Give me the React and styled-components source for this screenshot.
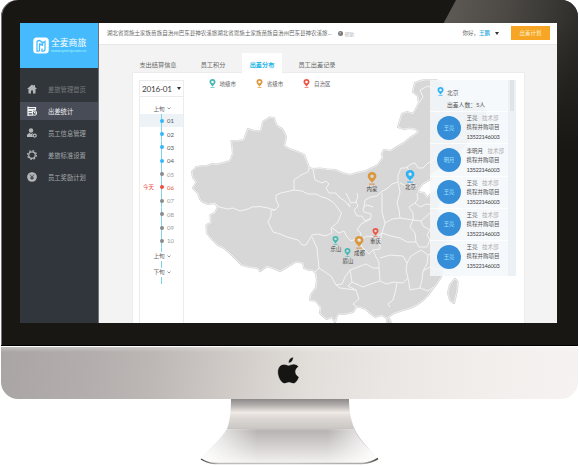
import React from "react";
import styled, { createGlobalStyle, css } from "styled-components";

const GlobalStyle = createGlobalStyle`
  * { box-sizing: border-box; }
  body {
    margin: 0;
    background: #fff;
    overflow: hidden;
    font-family: Lato, "Noto Sans CJK SC", sans-serif;
    color: #666;
  }
  svg { display: block; flex-shrink: 0; }
`;

/* ---------- Monitor ---------- */

const Monitor = styled.div`
  width: 579px;
  height: 466px;
  padding: 0 1px;
  display: flex;
  flex-direction: column;
  align-items: center;
`;

const Bezel = styled.div`
  position: relative;
  width: 577px;
  height: 346px;
  padding: 23px 20px 0 19px;
  border-radius: 17px 17px 0 0;
  border-bottom: 1px solid #000;
  background: #181714;
  box-shadow: inset 1px 0 0 #77757a, inset -1px 0 0 #5b5a56;

  &::before {
    content: "";
    position: absolute;
    inset: 0;
    border-radius: inherit;
    clip-path: polygon(455px 0, 100% 0, 100% 100%, 270px 100%);
    background:
      linear-gradient(to bottom, rgba(24, 23, 20, 0) 20px, #181714 150px),
      linear-gradient(100deg, #5d5954 440px, #4c4945 500px, #2d2c28 575px);
  }
`;

const Chin = styled.div`
  width: 577px;
  height: 53px;
  flex-shrink: 0;
  display: flex;
  justify-content: center;
  padding: 9px 3px 0 0;
  border-top: 1px solid #fff;
  border-radius: 0 0 17px 17px;
  background:
    linear-gradient(to bottom, rgba(255, 255, 255, 0.3), rgba(255, 255, 255, 0) 5px),
    linear-gradient(98deg, #aaa5a5 0, #b3aead 90px, #bcb7b5 150px, #d2cdc9 240px, #e2dfdb 310px, #ebe7e4 390px, #f1eeec 480px, #f5f2f1 577px);
`;

const Screen = styled.div`
  position: relative;
  width: 537px;
  height: 300px;
  display: flex;
  overflow: hidden;
  background: #f3f3f3;
`;

/* ---------- Sidebar ---------- */

const Sidebar = styled.aside`
  width: 79px;
  background: linear-gradient(#31363b, #30363c);
  border-right: 1px solid #6f7478;
`;

const Brand = styled.div`
  width: 78px;
  height: 45px;
  padding: 0 0 1px 13px;
  display: flex;
  align-items: center;
  gap: 2px;
  background: #45bbfd;
  color: #fff;
`;

const BrandText = styled.div`
  display: flex;
  flex-direction: column;
  white-space: nowrap;
`;

const BrandName = styled.strong`
  font-size: 8.8px;
  line-height: 10px;
  font-weight: 400;
`;

const BrandUrl = styled.span`
  font-size: 4px;
  line-height: 5px;
  color: #a4f6f8;
`;

const Nav = styled.nav`
  padding-top: 12px;
  display: flex;
  flex-direction: column;
  gap: 4px;
`;

const NavItem = styled.a`
  height: 18px;
  padding-left: 7px;
  display: flex;
  align-items: center;
  gap: 11px;
  font-size: 6.3px;
  white-space: nowrap;
  color: ${(p) => (p.$active ? "#f2f3f4" : p.$dim ? "#767a7d" : "#a5a8aa")};
  background: ${(p) => (p.$active ? "#474c57" : "transparent")};

  svg { color: ${(p) => (p.$active ? "#f2f3f4" : "#b4b5b6")}; }
`;

/* ---------- Main column ---------- */

const Main = styled.main`
  width: 458px;
  display: flex;
  flex-direction: column;
`;

const Header = styled.header`
  height: 22px;
  padding: 0 7px 1px 8px;
  display: flex;
  align-items: center;
  background: #fff;
  border-bottom: 1px solid #e8e8e8;
  font-size: 5.52px;
  white-space: nowrap;
`;

const Address = styled.span`
  width: 230.5px;
`;

const Help = styled.span`
  display: flex;
  align-items: center;
  gap: 2px;
  color: #b3b3b3;
  font-size: 4.8px;
`;

const HelpDot = styled.i`
  width: 5px;
  height: 5px;
  border-radius: 50%;
  background: #777;
  color: #fff;
  font: normal 4px/5px Lato, sans-serif;
  text-align: center;
`;

const User = styled.span`
  margin-left: auto;
  display: flex;
  align-items: center;
  b { color: #32a8de; font-weight: 500; }
`;

const Caret = styled.i`
  margin-left: ${(p) => p.$gap}px;
  border: 2.5px solid transparent;
  border-top: 3px solid #333;
  border-bottom: 0;
`;

const PlanButton = styled.button`
  width: 39px;
  height: 14px;
  margin-left: 12px;
  padding: 0;
  border: 0;
  background: #f7a524;
  color: #fff1cf;
  font: 5.5px Lato, "Noto Sans CJK SC", sans-serif;
`;

const Tabs = styled.div`
  height: 27px;
  padding: 8px 0 0 33px;
  display: flex;
  font-size: 6.2px;
`;

const Tab = styled.span`
  width: ${(p) => p.$w}px;
  padding-top: 3px;
  display: flex;
  justify-content: center;
  align-items: center;
  white-space: nowrap;
  color: #666;
  ${(p) =>
    p.$active &&
    css`
      margin-bottom: -1px;
      padding-top: 2px;
      position: relative;
      z-index: 1;
      background: #fff;
      color: #1fb5e6;
      font-weight: 700;
    `}
`;

const Board = styled.section`
  width: 393px;
  height: 251px;
  margin-left: 33px;
  padding-left: 6px;
  display: flex;
  background: #fff;
  border: 1px solid #ececec;
  border-bottom: 0;
`;

/* ---------- Timeline ---------- */

const Timeline = styled.div`
  width: 45px;
  margin-top: 7px;
  border: 1px solid #ececec;
  border-bottom: 0;
`;

const Month = styled.div`
  height: 16px;
  padding-left: 2px;
  display: flex;
  align-items: center;
  border-bottom: 1px solid #ececec;
  font-size: 8.2px;
  letter-spacing: -0.25px;
  white-space: nowrap;
  color: #444;
`;

const Period = styled.div`
  height: ${(p) => p.$h}px;
  padding: ${(p) => p.$top || 0}px 0 0 13.5px;
  display: flex;
  align-items: center;
  gap: 2px;
  font-size: 5.6px;
  white-space: nowrap;
`;

const DayRow = styled.div`
  height: 13.36px;
  display: grid;
  grid-template-columns: 18px 7px 1fr;
  align-items: center;
  font-size: 6px;
  color: ${(p) => ({ done: "#555", next: "#999", today: "#e8503f" })[p.$state]};
  background: ${(p) => (p.$selected ? "#edf2f6" : "transparent")};
`;

const TodayMark = styled.span`
  padding-left: 3px;
  font-size: 5.5px;
  white-space: nowrap;
  color: #e8503f;
`;

const Track = styled.span`
  height: 100%;
  display: flex;
  justify-content: center;
  align-items: center;
  background: linear-gradient(#7fd3e6, #7fd3e6) center / 1px 100% no-repeat;
`;

const Dot = styled.i`
  width: 4px;
  height: 4px;
  border-radius: 50%;
  background: ${(p) => ({ done: "#35b6fb", next: "#8b8b8b", today: "#f04e3b" })[p.$state]};
`;

const DayNumber = styled.span`
  padding-left: 2px;
`;

const Link = styled.div`
  width: 1px;
  height: ${(p) => p.$h}px;
  margin-left: 21px;
  background: #7fd3e6;
`;

/* ---------- Map ---------- */

const MapArea = styled.div`
  position: relative;
  width: 340px;
  height: 250px;
`;

const Legend = styled.div`
  position: absolute;
  left: 25px;
  top: 6px;
  display: flex;
  font-size: 5.5px;
`;

const LegendItem = styled.span`
  width: 47.2px;
  display: flex;
  align-items: center;
  gap: 3.5px;
  white-space: nowrap;
`;

const City = styled.div`
  position: absolute;
  left: ${(p) => p.$x - 15}px;
  top: ${(p) => p.$y}px;
  width: 30px;
  display: flex;
  flex-direction: column;
  align-items: center;
`;

const CityName = styled.span`
  font-size: 5.4px;
  line-height: 9px;
  color: #444;
`;

const People = styled.aside`
  position: absolute;
  left: 246px;
  top: 7px;
  width: 86px;
  height: 196px;
  display: flex;
  background: rgba(244, 248, 251, 0.84);
`;

const PeopleList = styled.div`
  width: 78px;
`;

const PeopleHead = styled.div`
  height: 31.3px;
  padding: 6.5px 0 0 7px;
  display: flex;
  gap: 3px;
  font-size: 5.8px;
  line-height: 12.3px;
  color: #555;
  white-space: nowrap;
`;

const Person = styled.div`
  height: 32.2px;
  padding-left: 7px;
  display: flex;
  align-items: center;
  gap: 5.5px;
  border-top: 1px solid rgba(255, 255, 255, 0.75);
`;

const Avatar = styled.span`
  width: 24px;
  height: 24px;
  border-radius: 50%;
  background: #358ed7;
  color: #9fe0ff;
  font-size: 5.3px;
  line-height: 24px;
  text-align: center;
`;

const PersonInfo = styled.div`
  display: flex;
  flex-direction: column;
  font-size: 5.5px;
  line-height: 9px;
  white-space: nowrap;
  color: #555;
`;

const Dept = styled.span`
  margin-left: 4.5px;
  color: #aaa;
`;

const Phone = styled.span`
  font-size: 5.7px;
  letter-spacing: -0.3px;
  color: #444;
`;

const Scrollbar = styled.div`
  width: 8px;
  padding-left: 2px;
  background: rgba(233, 239, 242, 0.8);
`;

const Thumb = styled.div`
  width: 4px;
  height: 31px;
  background: #e1e4e7;
`;

/* ---------- Drawings ---------- */

function Pin({ color, size = 9 }) {
  return (
    <svg width={size * 0.78} height={size} viewBox="0 0 14 18">
      <path fill={color} fillRule="evenodd" d="M7 0C3.2 0 1 2.7 1 5.8 1 9.5 5 11.5 7 15c2-3.5 6-5.5 6-9.2C13 2.7 10.8 0 7 0Zm0 3.4a2.5 2.5 0 1 1 0 5 2.5 2.5 0 0 1 0-5Z" />
      <path d="M3 16.8h8" stroke={color} strokeWidth="1.5" />
    </svg>
  );
}

function Chevron() {
  return (
    <svg width="4" height="3" viewBox="0 0 8 6" fill="none" stroke="#777" strokeWidth="1.5">
      <path d="M1 1l3 3 3-3" />
    </svg>
  );
}

function BrandMark() {
  return (
    <svg width="16" height="17" viewBox="0 0 32 34">
      <rect x="0.5" y="1" width="31" height="32" rx="7" fill="#fff" />
      <g fill="none" stroke="#45bbfd" strokeWidth="2.5">
        <path d="M13 28H8V9q4-4 8 0t8 0v15q0 4-4 4h-2v-5" />
        <path d="M13 28V14M13 12l3 4 3-4v6" />
      </g>
    </svg>
  );
}

const navIcons = {
  home: <path fill="currentColor" d="M10 1 0 10h3v9h5v-6h4v6h5v-9h3L16 6V2h-3v2Z" />,
  stats: (
    <g fill="none" stroke="currentColor" strokeWidth="2">
      <path d="M2 1v19M3 3h14v4H3M3 9h8v4H3M3 18h9" strokeWidth="2.5" />
      <circle cx="15" cy="14" r="4.5" />
      <path d="M15 11v3h3" />
    </g>
  ),
  staff: (
    <g fill="currentColor">
      <circle cx="8" cy="5" r="4.5" />
      <path d="M0 18v-4q1-3 5-4l3 2 4-2q-3 5 0 8Z" />
      <circle cx="15.5" cy="15" r="3" fill="none" stroke="currentColor" strokeWidth="2.5" />
    </g>
  ),
  gear: (
    <g fill="none" stroke="currentColor">
      <circle cx="10" cy="10" r="6.5" strokeWidth="2.5" />
      <circle cx="10" cy="10" r="8.8" strokeWidth="2.4" strokeDasharray="3.46 3.45" />
    </g>
  ),
  coin: (
    <g>
      <circle cx="10" cy="10" r="9.7" fill="currentColor" />
      <path d="m6 5 4 5 4-5M10 10v6M6.5 10.5h7M6.5 13h7" fill="none" stroke="#31363b" strokeWidth="1.5" />
    </g>
  ),
};

function NavIcon({ name }) {
  return <svg width="10" height="10" viewBox="0 0 20 20">{navIcons[name]}</svg>;
}

const MAINLAND =
  "M270 117.500L274 118 275 122 277 126 282 129 284 132 286 137 285 142 284 146 289 149 295 151 300 153 304 155 306 160 309 168 313 169 320 168.500 327 169.500 335 170 342 173 350 175 357 173 366 171 372 168 378 165 383 158 382 154 384 150 391 151 397 147 404 143 410 138 415 135 419 132 416 129 410 128 404 129 398 127 400 121 402 114 407 112 413 114 416 109 419 103 418 96 413 92 414 87 415 83 420 81 425 80 436 80 441 83 446 93 450 102 456 108 462 110 468 105 476 101 483 104 485 112 482 119 482 128 478 134 471 136 467 143 460 150 453 155 446 160 441 166 436 170 432 172 430 175 431 179 427 181 422 184 419 188 418 192 424 193 427 198 432 193 437 190 444 189 449 192 443 198 438 203 437 210 441 220 445 228 450 234 446 237 451 240 445 243 449 249 446 257 445 263 442 270 441 277 437 283 433 288 428 295 423 300 416 305 410 308 403 310 397 312 392 314 388 317 390 321 392 325 387 325 387 318 382 315 375 317 370 313 366 309 360 307 356 307 353 312 345 314 338 314 336 318 335 322 332 317 327 319 323 316 320 313 321 307 316 301 310 300 311 295 316 288 317 280 316 273 313 270 309 270 304 268 303 263 299 262 295 262 287 267 280 271 273 268 267 266 260 271 258 268 250 267 242 265 236 259 230 253 224 248 218 245 212 239 207 233 206.500 225 211 223 210.500 215 215 213 218 207 215 203 208 204 203 202 200 199 198 193 193 188 196.500 182 193 177 192 172 196.500 167 202 166 207 166 212 164 217 164.500 223 163 230 161 233 154 232.500 148 231.500 141 238 141 244 140 248 129 254 131 261 131 263 122Z";

const TAIWAN = "M455 279L457.500 282 457 290 454 303 450 300 448 293 450 285Z";

const BORDERS = [
  "M309 168L308 172 301 175 294 180 294 190 281 193 276 195 276 200 279 206 275 210 271 210",
  "M215 203L219 207 228 209 233 208 240 211 248 209 252 207 260 206.500 268 208 275 210",
  "M271 210L271 216 268 222 273 232 280 234 287 237 298 240 302 245 306 245 309 240 312 235 318 234 325 236 332 233 331 228 338 222 341.500 213 337 207 333 202 326 198 322 197 316 194 308 194 302 191 294 190",
  "M312 237L317 248 318 258 319 268 325 272 331 276 336 285 342 284 345 277 350 270",
  "M319 268L315 272",
  "M313 169L315 180 322 183 326 181 329 184 326 188 329 193 336 193 339 197 346 202 350 207",
  "M346 193L351 203 356 202 358 206 354 210 357 216 362 216 365 221 371 218 371 214 364 212 363 208 367 205 373 207",
  "M350 207L348 203M356 202L358 196 357 193M364 207L365 200 371 197 377 196 381 192 388 188 392 184 398 182 398 175 401 168 405 168 407 167 411 164 415 163 418 168 423 168 428 163 434 160 436 153 444 149 452 145 456 138 462 132",
  "M332 228L339 233 344 231 347 237 351 241 356 239 360 240 361 233 357 230 361 224 371 219",
  "M360 240L367 236 376 237 382 233 385 223 382 212 382 193",
  "M385 223L392 219 400 218 399 210 397 203 400 192 398 182",
  "M400 218L413 220 413 213 409 207 415 203 418 199 417 193",
  "M382 233L391 236 400 238 407 242 416 242 419 247 427 247 430 240 427 235 430 230 423 226 421 221 413 220 410 227 415 233 416 242",
  "M360 240L362 247 369 254 373 250 380 249 380 241 382 233M373 250L376 257 379 262 379 268 380 281 371 284 363 287 352 282 350 270 358 267 366 264 373 268 379 268",
  "M380 258L390 255 403 256 407 263 406 270 408 278 403 283 394 282 386 284 380 281",
  "M407 263L411 256 421 250 428 255 427 264 423 271 422 280 420 288 410 290 408 278",
  "M397 283L395 293 393 300 388 304 390 307M352 282L348 286 356 290 359 299 353 304 357 307M356 290L340 288 336 285",
  "M420 288L428 291 433 287M423 271L430 267 437 270 444 268M428 255L436 252 446 257",
  "M421 221L430 213 437 214M407 167L411 175 412 182 406 186 400 183M412 182L417 186M415 203L420 207 426 204 432 205",
  "M434 110L441 115 448 112 455 120 464 118M434 140L445 138 454 133 462 138 470 135M434 160L441 157 447 152 453 155",
  "M419 103L423 97 420 90 428 86 435 90 440 86",
];

function ChinaMap() {
  return (
    <svg width="340" height="250" viewBox="184 73 340 250">
      <g fill="#d7d7d7" stroke="#d4d4d4" strokeWidth="2.2" strokeLinejoin="round">
        <path d={MAINLAND} />
        <path d={TAIWAN} />
      </g>
      <g fill="none" stroke="#f6f6f6" strokeWidth="0.75" strokeLinejoin="round">
        <path d={MAINLAND} />
        <path d={TAIWAN} />
        {BORDERS.map((d) => (
          <path key={d} d={d} strokeWidth="0.9" />
        ))}
      </g>
    </svg>
  );
}

function AppleMark() {
  return (
    <svg width="25" height="30" viewBox="0 0 24 29">
      <path
        d="M17 7.8c-2 0-3.600 1.200-4.700 1.200S9.500 7.900 7.800 7.900C4.500 8 1.500 10.700 1.500 15.500c0 5.500 3.800 11.200 6.700 11.200 1.600 0 2.300-1 4.200-1s2.500 1 4.200 1c2.600 0 4.800-3.900 5.700-6.500-4.600-2.200-4.400-7.700-.5-9.800C20.700 8.700 18.800 7.800 17 7.800ZM16.600 1c-2.800.3-5 3-4.600 5.900C14.700 6.900 17 4 16.600 1Z"
        fill="#161513"
        stroke="#f8f7f5"
        strokeWidth="0.5"
      />
    </svg>
  );
}

function Stand() {
  return (
    <svg width="182" height="67" viewBox="199 399 182 67">
      <defs>
        <linearGradient id="neck" x1="0" y1="0" x2="0" y2="1">
          <stop offset="0" stopColor="#8c8989" />
          <stop offset=".1" stopColor="#b4b0ae" />
          <stop offset=".21" stopColor="#f0eae6" />
          <stop offset=".3" stopColor="#ddd8d4" />
          <stop offset=".45" stopColor="#cbc8c5" />
          <stop offset=".5" stopColor="#b8b4b3" />
          <stop offset=".7" stopColor="#cfcccb" />
          <stop offset="1" stopColor="#f3f1ef" />
        </linearGradient>
        <linearGradient id="shine">
          <stop offset="0" stopColor="#fff" stopOpacity=".95" />
          <stop offset=".32" stopColor="#fff" stopOpacity="0" />
          <stop offset=".72" stopColor="#fff" stopOpacity="0" />
          <stop offset="1" stopColor="#fff" stopOpacity=".95" />
        </linearGradient>
        <linearGradient id="rim">
          <stop offset="0" stopColor="#484644" />
          <stop offset=".1" stopColor="#bebbb8" />
          <stop offset=".5" stopColor="#c5c1bf" />
          <stop offset=".92" stopColor="#aaa7a4" />
          <stop offset="1" stopColor="#464441" />
        </linearGradient>
      </defs>
      <path d="M231 399h118c0 14 3 25 7 33 5 9 14 17 20 26l-10 5H212l-10-5c9-11 20-20 25-29 3-8 4-19 4-30Z" fill="url(#neck)" />
      <path d="M227 429h127c5 12 16 20 22 29l-10 5H212l-10-5c9-11 20-20 25-29Z" fill="url(#shine)" />
      <path d="M201 459q6 4 14 4.500h147q9-.5 16-5" fill="none" stroke="url(#rim)" strokeWidth="1.500" />
    </svg>
  );
}

/* ---------- Data ---------- */

const TEAL = "#45b9b1";
const ORANGE = "#dc963c";
const RED = "#ec5546";
const BLUE = "#2cb3f5";

const nav = [
  { icon: "home", label: "差旅管理首页", dim: true },
  { icon: "stats", label: "出差统计", active: true },
  { icon: "staff", label: "员工信息管理" },
  { icon: "gear", label: "差旅标准设置" },
  { icon: "coin", label: "员工奖励计划" },
];

const tabs = [
  { label: "支出结算信息", w: 52 },
  { label: "员工积分", w: 58 },
  { label: "出差分布", w: 40, active: true },
  { label: "员工出差记录", w: 70 },
];

const days = Array.from({ length: 10 }, (_, i) => ({
  label: String(i + 1).padStart(2, "0"),
  state: i < 4 ? "done" : i === 5 ? "today" : "next",
}));

const cities = [
  { name: "北京", x: 226.5, y: 96.5, color: BLUE, size: 13 },
  { name: "内蒙", x: 188, y: 99, color: ORANGE, size: 13 },
  { name: "成都", x: 175.5, y: 163, color: ORANGE, size: 13 },
  { name: "重庆", x: 191.5, y: 154.5, color: RED, size: 9 },
  { name: "乐山", x: 152, y: 162.5, color: TEAL, size: 9 },
  { name: "眉山", x: 164, y: 174.5, color: TEAL, size: 9 },
];

const people = ["王亮", "李明月", "王亮", "王亮", "王亮"];

const ADDRESS = "湖北省恩施土家族苗族自治州巴东县神农溪旅";

export default function App() {
  return (
    <Monitor>
      <GlobalStyle />
      <Bezel>
        <Screen>
          <Sidebar>
            <Brand>
              <BrandMark />
              <BrandText>
                <BrandName>全麦商旅</BrandName>
                <BrandUrl>www.qmtrip.com.cn</BrandUrl>
              </BrandText>
            </Brand>
            <Nav>
              {nav.map((n) => (
                <NavItem key={n.label} $active={n.active} $dim={n.dim}>
                  <NavIcon name={n.icon} />
                  {n.label}
                </NavItem>
              ))}
            </Nav>
          </Sidebar>

          <Main>
            <Header>
              <Address>{ADDRESS + ADDRESS}...</Address>
              <Help>
                <HelpDot>?</HelpDot>帮助
              </Help>
              <User>
                你好，<b>王鹏</b>
                <Caret $gap={5} />
              </User>
              <PlanButton>出差计划</PlanButton>
            </Header>

            <Tabs>
              {tabs.map((t) => (
                <Tab key={t.label} $w={t.w} $active={t.active}>{t.label}</Tab>
              ))}
            </Tabs>

            <Board>
              <Timeline>
                <Month>
                  2016-01
                  <Caret $gap={5} />
                </Month>
                <Period $h={17} $top={6}>上旬<Chevron /></Period>
                {days.map((d, i) => (
                  <DayRow key={d.label} $state={d.state} $selected={i === 0}>
                    <TodayMark>{d.state === "today" ? "今天" : ""}</TodayMark>
                    <Track><Dot $state={d.state} /></Track>
                    <DayNumber>{d.label}</DayNumber>
                  </DayRow>
                ))}
                <Link $h={4} />
                <Period $h={9}>上旬<Chevron /></Period>
                <Link $h={7} />
                <Period $h={9}>下旬<Chevron /></Period>
                <Link $h={7} />
              </Timeline>

              <MapArea>
                <ChinaMap />
                <Legend>
                  <LegendItem><Pin color={TEAL} />地级市</LegendItem>
                  <LegendItem><Pin color={ORANGE} />省级市</LegendItem>
                  <LegendItem><Pin color={RED} />自治区</LegendItem>
                </Legend>
                {cities.map((c) => (
                  <City key={c.name} $x={c.x} $y={c.y}>
                    <Pin color={c.color} size={c.size} />
                    <CityName>{c.name}</CityName>
                  </City>
                ))}
                <People>
                  <PeopleList>
                    <PeopleHead>
                      <Pin color={BLUE} />
                      <div>
                        北京
                        <br />
                        出差人数：5人
                      </div>
                    </PeopleHead>
                    {people.map((name, i) => (
                      <Person key={i}>
                        <Avatar>{name.slice(-2)}</Avatar>
                        <PersonInfo>
                          <span>{name}<Dept>技术部</Dept></span>
                          <span>携程并购项目</span>
                          <Phone>13522146003</Phone>
                        </PersonInfo>
                      </Person>
                    ))}
                  </PeopleList>
                  <Scrollbar><Thumb /></Scrollbar>
                </People>
              </MapArea>
            </Board>
          </Main>
        </Screen>
      </Bezel>
      <Chin><AppleMark /></Chin>
      <Stand />
    </Monitor>
  );
}
